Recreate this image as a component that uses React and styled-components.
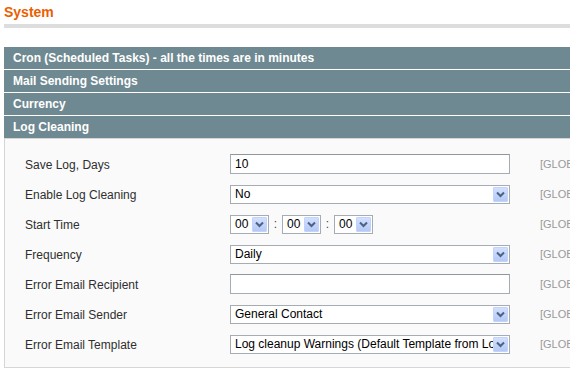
import React from "react";
import styled, { createGlobalStyle } from "styled-components";

const GlobalStyle = createGlobalStyle`
  html, body {
    margin: 0;
    padding: 0;
    background: #ffffff;
    overflow: hidden;
  }
  body {
    font-family: Arial, "Liberation Sans", Helvetica, sans-serif;
    font-size: 12px;
    color: #2f2f2f;
  }
`;

const Page = styled.div`
  width: 640px;
  padding: 0 0 0 4px;
`;

const Title = styled.h3`
  margin: 0;
  padding-top: 3px;
  height: 21px;
  font-size: 14px;
  line-height: 18px;
  font-weight: bold;
  color: #eb5e00;
`;

const TitleBar = styled.div`
  height: 4px;
  background: #dddddd;
  margin-bottom: 18px;
`;

const Sections = styled.div`
  padding-top: 1px;
`;

const SectionHead = styled.div`
  height: 22px;
  line-height: 23px;
  padding-left: 9px;
  margin-bottom: 1px;
  background: #6f8992;
  color: #ffffff;
  font-weight: bold;
  font-size: 12px;
`;

const Fieldset = styled.div`
  margin-top: -1px;
  background: #fafafa;
  border: 1px solid #d6d6d6;
  padding: 10px 0 8px 20px;
`;

const Row = styled.div`
  display: flex;
  align-items: center;
  height: 30px;
`;

const Label = styled.div`
  width: 205px;
  color: #2f2f2f;
  padding-top: 1px;
`;

const Value = styled.div`
  width: 280px;
  display: flex;
  align-items: center;
`;

const Scope = styled.div`
  margin-left: 30px;
  color: #999999;
  font-size: 11px;
  white-space: nowrap;
`;

const TextInput = styled.div`
  box-sizing: border-box;
  width: ${(p) => p.$width || "280px"};
  height: 20px;
  line-height: 18px;
  padding-left: 4px;
  background: #ffffff;
  border: 1px solid #a5acb2;
  border-top-color: #8f969c;
  color: #000000;
`;

const SelectBox = styled.div`
  box-sizing: border-box;
  width: ${(p) => p.$width || "280px"};
  height: 19px;
  display: flex;
  align-items: stretch;
  background: #ffffff;
  border: 1px solid #a5acb2;
  color: #000000;
  padding: 1px;
`;

const SelectText = styled.div`
  flex: 1;
  line-height: 15px;
  padding-left: 3px;
  white-space: nowrap;
  overflow: hidden;
`;

const ArrowButton = styled.div`
  box-sizing: border-box;
  width: 15px;
  display: flex;
  align-items: center;
  justify-content: center;
  background: linear-gradient(#d2e0fd, #b4c9f5);
  border: 1px solid #c3d3fd;
  border-radius: 1px;
`;

const Colon = styled.span`
  width: 13px;
  text-align: center;
  color: #444444;
`;

function Chevron() {
  return (
    <svg width="9" height="7" viewBox="0 0 9 7">
      <path d="M1 1.5 L4.5 5 L8 1.5" fill="none" stroke="#4d6185" strokeWidth="2" />
    </svg>
  );
}

function Select({ value, width }) {
  return (
    <SelectBox $width={width}>
      <SelectText>{value}</SelectText>
      <ArrowButton>
        <Chevron />
      </ArrowButton>
    </SelectBox>
  );
}

const sections = [
  "Cron (Scheduled Tasks) - all the times are in minutes",
  "Mail Sending Settings",
  "Currency",
  "Log Cleaning",
];

export default function App() {
  return (
    <Page>
      <GlobalStyle />
      <Title>System</Title>
      <TitleBar />
      <Sections>
        {sections.map((s) => (
          <SectionHead key={s}>{s}</SectionHead>
        ))}
      </Sections>
      <Fieldset>
        <Row>
          <Label>Save Log, Days</Label>
          <Value>
            <TextInput>10</TextInput>
          </Value>
          <Scope>[GLOBAL]</Scope>
        </Row>
        <Row>
          <Label>Enable Log Cleaning</Label>
          <Value>
            <Select value="No" />
          </Value>
          <Scope>[GLOBAL]</Scope>
        </Row>
        <Row>
          <Label>Start Time</Label>
          <Value>
            <Select value="00" width="39px" />
            <Colon>:</Colon>
            <Select value="00" width="39px" />
            <Colon>:</Colon>
            <Select value="00" width="39px" />
          </Value>
          <Scope>[GLOBAL]</Scope>
        </Row>
        <Row>
          <Label>Frequency</Label>
          <Value>
            <Select value="Daily" />
          </Value>
          <Scope>[GLOBAL]</Scope>
        </Row>
        <Row>
          <Label>Error Email Recipient</Label>
          <Value>
            <TextInput />
          </Value>
          <Scope>[GLOBAL]</Scope>
        </Row>
        <Row>
          <Label>Error Email Sender</Label>
          <Value>
            <Select value="General Contact" />
          </Value>
          <Scope>[GLOBAL]</Scope>
        </Row>
        <Row>
          <Label>Error Email Template</Label>
          <Value>
            <Select value="Log cleanup Warnings (Default Template from Locale)" />
          </Value>
          <Scope>[GLOBAL]</Scope>
        </Row>
      </Fieldset>
    </Page>
  );
}
